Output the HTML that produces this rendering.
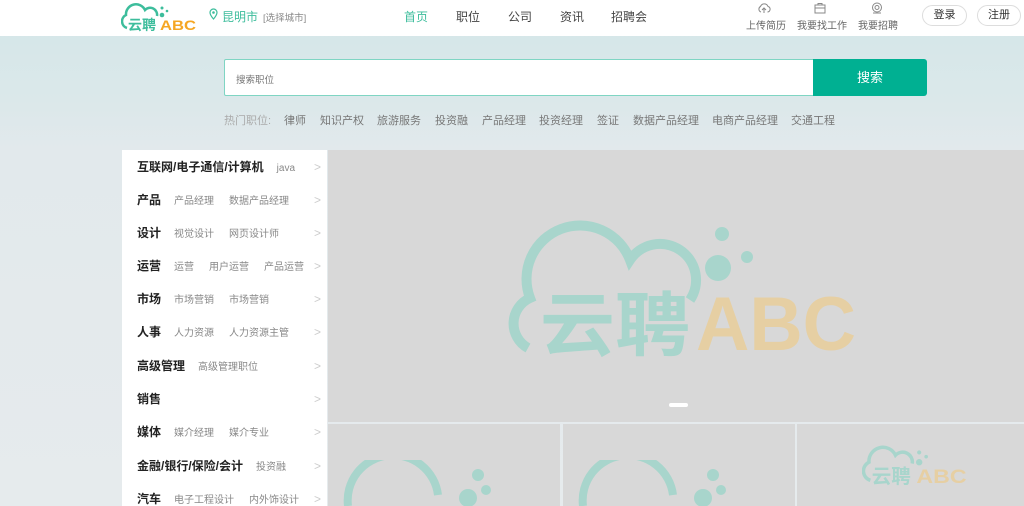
<!DOCTYPE html>
<html><head><meta charset="utf-8"><style>
*{margin:0;padding:0;box-sizing:border-box}
html,body{width:1024px;height:506px;overflow:hidden}
body{font-family:"Liberation Sans","Noto Sans CJK SC",sans-serif;background:linear-gradient(180deg,#d3e6e8 0,#dbe8ea 100px,#e2e9ec 150px,#e6ebed 506px);position:relative}
.a{position:absolute;white-space:nowrap}
.hdr{position:absolute;left:0;top:0;width:1024px;height:36px;background:#fff}
.nav{font-size:12px;color:#444;top:8px}
.ic{font-size:10px;color:#666;top:17px}
.btn{top:5px;height:21px;border:1px solid #ddd;border-radius:11px;font-size:11px;color:#333;text-align:center;line-height:19px}
.menu{position:absolute;left:122px;top:150px;width:205px;height:356px;background:#fff}
.row{position:absolute;left:15px;height:33px;line-height:33px;font-size:10px;color:#888;white-space:nowrap;width:190px}
.row b{font-size:12px;color:#222;margin-right:13px}
.row span{margin-right:15px}
.row i{position:absolute;right:6px;top:0;font-style:normal;color:#ccc;font-size:12px}
.hot{top:112px;font-size:11px;color:#777}
</style></head><body>
<div class="hdr"></div>
<svg class="a" style="left:121px;top:2px" width="76" height="30" viewBox="0 0 76 30">
<path d="M6 26 A7 7 0 0 1 5 13 A10 10 0 0 1 24 8 A7 7 0 0 1 36 14" fill="none" stroke="#3dbd9c" stroke-width="2.5"/>
<circle cx="41" cy="6" r="1.5" fill="#3dbd9c"/><circle cx="46" cy="9" r="1.3" fill="#3dbd9c"/><circle cx="41" cy="13" r="2.3" fill="#3dbd9c"/>
<text x="7" y="28" font-size="14" font-weight="bold" fill="#3dbd9c" font-family="Noto Sans CJK SC">云聘</text>
<text x="39" y="28" font-size="14" font-weight="bold" fill="#f5a623" font-family="Liberation Sans" textLength="36" lengthAdjust="spacingAndGlyphs">ABC</text>
</svg>
<svg class="a" style="left:209px;top:8px" width="9" height="12" viewBox="0 0 9 12"><path d="M4.5 11 C1 7 1 5.5 1 4.5 A3.5 3.5 0 0 1 8 4.5 C8 5.5 8 7 4.5 11Z" fill="none" stroke="#3dbd9c" stroke-width="1.2"/><circle cx="4.5" cy="4.5" r="1.3" fill="#3dbd9c"/></svg>
<div class="a" style="left:222px;top:8px;font-size:12px;color:#3dbd9c">昆明市</div>
<div class="a" style="left:263px;top:10px;font-size:9.5px;color:#888">[选择城市]</div>
<div class="a nav" style="left:404px;color:#3dbd9c">首页</div>
<div class="a nav" style="left:456px">职位</div>
<div class="a nav" style="left:508px">公司</div>
<div class="a nav" style="left:560px">资讯</div>
<div class="a nav" style="left:611px">招聘会</div>
<svg class="a" style="left:757px;top:2px" width="14" height="12" viewBox="0 0 14 12"><path d="M4 10 A3 3 0 0 1 3.5 4.5 A4 4 0 0 1 11 4.5 A2.8 2.8 0 0 1 10.5 10 M7 11 V6 M5 8 L7 6 L9 8" fill="none" stroke="#888" stroke-width="1"/></svg>
<svg class="a" style="left:813px;top:2px" width="14" height="12" viewBox="0 0 14 12"><rect x="2" y="3" width="10" height="8" fill="none" stroke="#888"/><path d="M5 3 V1.5 H9 V3 M2 6 H12" fill="none" stroke="#888"/></svg>
<svg class="a" style="left:870px;top:2px" width="14" height="12" viewBox="0 0 14 12"><circle cx="7" cy="5.5" r="4.5" fill="none" stroke="#888"/><circle cx="7" cy="5.5" r="2" fill="none" stroke="#888"/><path d="M3 11 H11" stroke="#888"/></svg>
<div class="a ic" style="left:746px">上传简历</div>
<div class="a ic" style="left:797px">我要找工作</div>
<div class="a ic" style="left:858px">我要招聘</div>
<div class="a btn" style="left:922px;width:45px">登录</div>
<div class="a btn" style="left:977px;width:44px">注册</div>

<div class="a" style="left:224px;top:59px;width:590px;height:37px;background:#fff;border:1px solid #7fd5c3;border-radius:2px 0 0 2px"></div>
<div class="a" style="left:236px;top:72px;font-size:9.5px;color:#777">搜索职位</div>
<div class="a" style="left:813px;top:59px;width:114px;height:37px;background:#00b092;border-radius:0 3px 3px 0;color:#fff;font-size:13px;text-align:center;line-height:37px">搜索</div>
<div class="a hot" style="left:224px;color:#aaa">热门职位:</div>
<div class="a hot" style="left:284px">律师</div>
<div class="a hot" style="left:320px">知识产权</div>
<div class="a hot" style="left:377px">旅游服务</div>
<div class="a hot" style="left:435px">投资融</div>
<div class="a hot" style="left:482px">产品经理</div>
<div class="a hot" style="left:539px">投资经理</div>
<div class="a hot" style="left:597px">签证</div>
<div class="a hot" style="left:633px">数据产品经理</div>
<div class="a hot" style="left:712px">电商产品经理</div>
<div class="a hot" style="left:791px">交通工程</div>

<div class="menu">
<div class="row" style="top:1px"><b>互联网/电子通信/计算机</b><span>java</span><i>&gt;</i></div>
<div class="row" style="top:34px"><b>产品</b><span>产品经理</span><span>数据产品经理</span><i>&gt;</i></div>
<div class="row" style="top:67px"><b>设计</b><span>视觉设计</span><span>网页设计师</span><i>&gt;</i></div>
<div class="row" style="top:100px"><b>运营</b><span>运营</span><span>用户运营</span><span>产品运营</span><i>&gt;</i></div>
<div class="row" style="top:133px"><b>市场</b><span>市场营销</span><span>市场营销</span><i>&gt;</i></div>
<div class="row" style="top:166px"><b>人事</b><span>人力资源</span><span>人力资源主管</span><i>&gt;</i></div>
<div class="row" style="top:200px"><b>高级管理</b><span>高级管理职位</span><i>&gt;</i></div>
<div class="row" style="top:233px"><b>销售</b><i>&gt;</i></div>
<div class="row" style="top:266px"><b>媒体</b><span>媒介经理</span><span>媒介专业</span><i>&gt;</i></div>
<div class="row" style="top:300px"><b>金融/银行/保险/会计</b><span>投资融</span><i>&gt;</i></div>
<div class="row" style="top:333px"><b>汽车</b><span>电子工程设计</span><span>内外饰设计</span><i>&gt;</i></div>
</div>

<div class="a" style="left:328px;top:150px;width:696px;height:272px;background:#d8d8d8"></div>
<svg class="a" style="left:500px;top:220px" width="370" height="140" viewBox="0 0 370 140">
<path d="M28 128 A28 28 0 0 1 30 78 A50 50 0 0 1 130 40 A35 35 0 0 1 190 80" fill="none" stroke="#a8d5cc" stroke-width="10"/>
<circle cx="222" cy="14" r="7" fill="#a8d5cc"/><circle cx="247" cy="37" r="6" fill="#a8d5cc"/><circle cx="218" cy="48" r="13" fill="#a8d5cc"/>
<text x="40" y="130" font-size="70" font-weight="bold" fill="#a8d5cc" font-family="Noto Sans CJK SC" textLength="150" lengthAdjust="spacingAndGlyphs">云聘</text>
<text x="196" y="130" font-size="76" font-weight="bold" fill="#e6cfa3" font-family="Liberation Sans" textLength="160" lengthAdjust="spacingAndGlyphs">ABC</text>
</svg>
<div class="a" style="left:669px;top:403px;width:19px;height:4px;background:#fff;border-radius:2px"></div>
<div class="a" style="left:328px;top:424px;width:232px;height:82px;background:#d8d8d8"></div>
<div class="a" style="left:563px;top:424px;width:232px;height:82px;background:#d8d8d8"></div>
<div class="a" style="left:797px;top:424px;width:227px;height:82px;background:#d8d8d8"></div>
<svg class="a" style="left:328px;top:460px" width="232" height="46"><path d="M20 46 A38 38 0 0 1 110 35" fill="none" stroke="#a8d5cc" stroke-width="8"/><circle cx="150" cy="15" r="6" fill="#a8d5cc"/><circle cx="140" cy="38" r="9" fill="#a8d5cc"/><circle cx="158" cy="30" r="5" fill="#a8d5cc"/></svg>
<svg class="a" style="left:563px;top:460px" width="232" height="46"><path d="M20 46 A38 38 0 0 1 110 35" fill="none" stroke="#a8d5cc" stroke-width="8"/><circle cx="150" cy="15" r="6" fill="#a8d5cc"/><circle cx="140" cy="38" r="9" fill="#a8d5cc"/><circle cx="158" cy="30" r="5" fill="#a8d5cc"/></svg>
<svg class="a" style="left:862px;top:444px" width="106" height="42" viewBox="0 0 76 30">
<path d="M6 26 A7 7 0 0 1 5 13 A10 10 0 0 1 24 8 A7 7 0 0 1 36 14" fill="none" stroke="#a8d5cc" stroke-width="2.5"/>
<circle cx="41" cy="6" r="1.5" fill="#a8d5cc"/><circle cx="46" cy="9" r="1.3" fill="#a8d5cc"/><circle cx="41" cy="13" r="2.3" fill="#a8d5cc"/>
<text x="7" y="28" font-size="14" font-weight="bold" fill="#a8d5cc" font-family="Noto Sans CJK SC">云聘</text>
<text x="39" y="28" font-size="14" font-weight="bold" fill="#e6cfa3" font-family="Liberation Sans" textLength="36" lengthAdjust="spacingAndGlyphs">ABC</text>
</svg>
</body></html>
